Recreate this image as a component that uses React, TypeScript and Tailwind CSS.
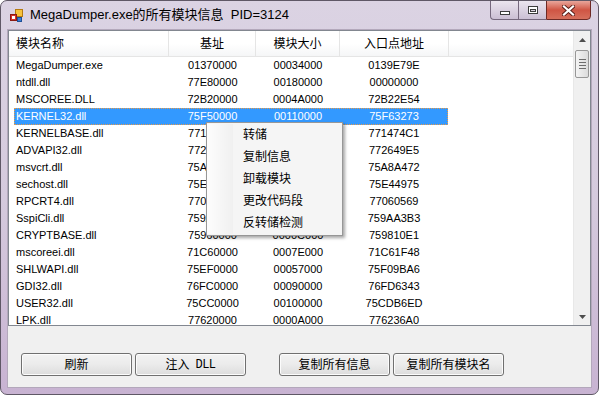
import React from "react";

type Row = [string, string, string, string];

const rows: Row[] = [
  ["MegaDumper.exe", "01370000", "00034000", "0139E79E"],
  ["ntdll.dll", "77E80000", "00180000", "00000000"],
  ["MSCOREE.DLL", "72B20000", "0004A000", "72B22E54"],
  ["KERNEL32.dll", "75F50000", "00110000", "75F63273"],
  ["KERNELBASE.dll", "77140000", "0004B000", "771474C1"],
  ["ADVAPI32.dll", "77250000", "000A0000", "772649E5"],
  ["msvcrt.dll", "75A80000", "000AC000", "75A8A472"],
  ["sechost.dll", "75E30000", "00019000", "75E44975"],
  ["RPCRT4.dll", "77050000", "000A1000", "77060569"],
  ["SspiCli.dll", "759A0000", "0005D000", "759AA3B3"],
  ["CRYPTBASE.dll", "75960000", "0000C000", "759810E1"],
  ["mscoreei.dll", "71C60000", "0007E000", "71C61F48"],
  ["SHLWAPI.dll", "75EF0000", "00057000", "75F09BA6"],
  ["GDI32.dll", "76FC0000", "00090000", "76FD6343"],
  ["USER32.dll", "75CC0000", "00100000", "75CDB6ED"],
  ["LPK.dll", "77620000", "0000A000", "776236A0"],
];

const cjk = "font-['Liberation_Sans','Noto_Sans_CJK_SC',sans-serif]";

function AppIcon() {
  return (
    <svg width="13" height="13" viewBox="0 0 13 13">
      <rect x="5.5" y="0.5" width="7" height="7" fill="#f7c23c" stroke="#b57a10" />
      <rect x="0.5" y="5.5" width="6" height="6" fill="#d8322a" stroke="#8c1a14" />
      <rect x="2" y="7" width="3" height="3" fill="#ffffff" />
      <rect x="7.5" y="8.5" width="4" height="4" fill="#3b7fd6" stroke="#1d4f96" />
    </svg>
  );
}

function Btn({ children, className = "" }: { children: React.ReactNode; className?: string }) {
  return (
    <div
      className={`w-[111px] h-[23px] rounded-[3px] border border-[#707070] bg-gradient-to-b from-[#f3f3f3] via-[#ebebeb] to-[#dcdcdc] flex items-center justify-center text-[12px] text-black shadow-[inset_0_0_0_1px_#fcfcfc] ${className}`}
    >
      {children}
    </div>
  );
}

export default function App() {
  return (
    <div className={`w-[599px] h-[395px] bg-white relative ${cjk}`}>
      <div className="w-full h-full rounded-[7px] border border-[#5f5866] bg-gradient-to-b from-[#dbd3e3] via-[#d5cadd] to-[#c8b3d2] flex flex-col overflow-hidden">
        {/* title bar */}
        <div className="h-[29px] flex items-start shrink-0">
          <div className="ml-[9px] mt-[8px]">
            <AppIcon />
          </div>
          <div className="ml-[7px] mt-[5px] text-[13px] leading-[18px] text-black whitespace-pre">
            MegaDumper.exe的所有模块信息  PID=3124
          </div>
          <div className="flex-1" />
          <div className="mr-[7px] -mt-px flex h-[20px]">
            <div className="w-[28px] h-full border border-[#75687d] border-r-0 rounded-bl-[4px] bg-gradient-to-b from-[#ebe5ef] to-[#cbbfd4] flex items-end justify-center pb-[4px]">
              <div className="w-[10px] h-[4px] border border-[#3d3d3d] bg-white" />
            </div>
            <div className="w-[28px] h-full border border-[#75687d] border-r-0 bg-gradient-to-b from-[#ebe5ef] to-[#cbbfd4] flex items-center justify-center">
              <div className="w-[10px] h-[8px] border border-[#3d3d3d] bg-white flex items-center justify-center">
                <div className="w-[6px] h-[3px] border border-[#3d3d3d] bg-[#d8d0de]" />
              </div>
            </div>
            <div className="w-[45px] h-full border border-[#6e2a25] rounded-br-[4px] bg-gradient-to-b from-[#e8a59b] via-[#cf5544] to-[#d66f5c] flex items-center justify-center">
              <svg width="13" height="11" viewBox="0 0 13 11">
                <path d="M2 1.5 L11 9.5 M11 1.5 L2 9.5" stroke="#5a1e18" strokeWidth="4" strokeLinecap="square" />
                <path d="M2 1.5 L11 9.5 M11 1.5 L2 9.5" stroke="#ffffff" strokeWidth="2.2" strokeLinecap="square" />
              </svg>
            </div>
          </div>
        </div>

        {/* client */}
        <div className="mx-[7px] mb-[7px] flex-1 bg-[#f0f0f0] flex flex-col shadow-[0_0_0_1px_#b3a8bb]">
          {/* list view */}
          <div className="h-[296px] border border-[#828790] bg-white flex overflow-hidden">
            <div className="flex-1 flex flex-col overflow-hidden">
              {/* header */}
              <div className="h-[26px] shrink-0 flex bg-gradient-to-b from-white via-white to-[#f5f6f7] border-b border-[#e5e5e5] text-[12px] text-black">
                <div className="w-[160px] border-r border-[#e5e5e5] pl-[7px] flex items-center">模块名称</div>
                <div className="w-[87px] border-r border-[#e5e5e5] flex items-center justify-center">基址</div>
                <div className="w-[84px] border-r border-[#e5e5e5] flex items-center justify-center">模块大小</div>
                <div className="w-[109px] border-r border-[#e5e5e5] flex items-center justify-center">入口点地址</div>
                <div className="flex-1" />
              </div>
              {/* rows */}
              <div className="flex flex-col font-['Liberation_Sans',sans-serif] text-[11px]">
                {rows.map((r, i) => {
                  const sel = i === 3;
                  return (
                    <div
                      key={i}
                      className={`h-[17px] shrink-0 ml-[5px] w-[434px] flex items-center ${
                        sel ? "bg-[#3399ff] text-white outline outline-1 outline-dotted outline-[#e59a4a] -outline-offset-1" : "text-black"
                      }`}
                    >
                      <div className="w-[155px] pl-[2px] whitespace-nowrap overflow-hidden">{r[0]}</div>
                      <div className="w-[87px] text-center">{r[1]}</div>
                      <div className="w-[84px] text-center">{r[2]}</div>
                      <div className="w-[108px] text-center">{r[3]}</div>
                    </div>
                  );
                })}
              </div>
            </div>
            {/* scrollbar */}
            <div className="w-[17px] shrink-0 bg-[#f0f0f0] flex flex-col border-l border-[#e8e8e8]">
              <div className="h-[17px] flex items-center justify-center">
                <svg width="7" height="4" viewBox="0 0 7 4">
                  <path d="M0 4 L3.5 0 L7 4 Z" fill="#4d4d4d" />
                </svg>
              </div>
              <div className="mx-[1px] mt-[2px] h-[28px] rounded-[2px] border border-[#979797] bg-gradient-to-r from-[#f4f4f4] to-[#dcdcdc] flex flex-col items-center justify-center gap-[2px]">
                <div className="w-[7px] h-px bg-[#6d6d6d]" />
                <div className="w-[7px] h-px bg-[#6d6d6d]" />
                <div className="w-[7px] h-px bg-[#6d6d6d]" />
                <div className="w-[7px] h-px bg-[#6d6d6d]" />
              </div>
              <div className="flex-1" />
              <div className="h-[17px] flex items-center justify-center">
                <svg width="7" height="4" viewBox="0 0 7 4">
                  <path d="M0 0 L7 0 L3.5 4 Z" fill="#4d4d4d" />
                </svg>
              </div>
            </div>
          </div>
          {/* buttons */}
          <div className="flex pl-[13px] pt-[27px]">
            <Btn>刷新</Btn>
            <Btn className="ml-[3px]">
              注入<span className="ml-[6px] font-['Liberation_Mono',monospace] text-[12px] tracking-[-0.5px]">DLL</span>
            </Btn>
            <Btn className="ml-[33px]">复制所有信息</Btn>
            <Btn className="ml-[3px]">复制所有模块名</Btn>
          </div>
        </div>
      </div>

      {/* context menu */}
      <div className="absolute left-[206px] top-[122px] w-[137px] h-[114px] border border-[#979797] bg-[#f5f5f5] shadow-[2px_2px_3px_rgba(0,0,0,0.35)] flex flex-col py-px text-[12px] text-black">
        {["转储", "复制信息", "卸载模块", "更改代码段", "反转储检测"].map((t) => (
          <div key={t} className="h-[22px] flex items-center">
            <div className="w-[26px] h-full bg-gradient-to-r from-[#fdfdfd] to-[#f0f0f0]" />
            <div className="pl-[10px]">{t}</div>
          </div>
        ))}
      </div>
    </div>
  );
}
